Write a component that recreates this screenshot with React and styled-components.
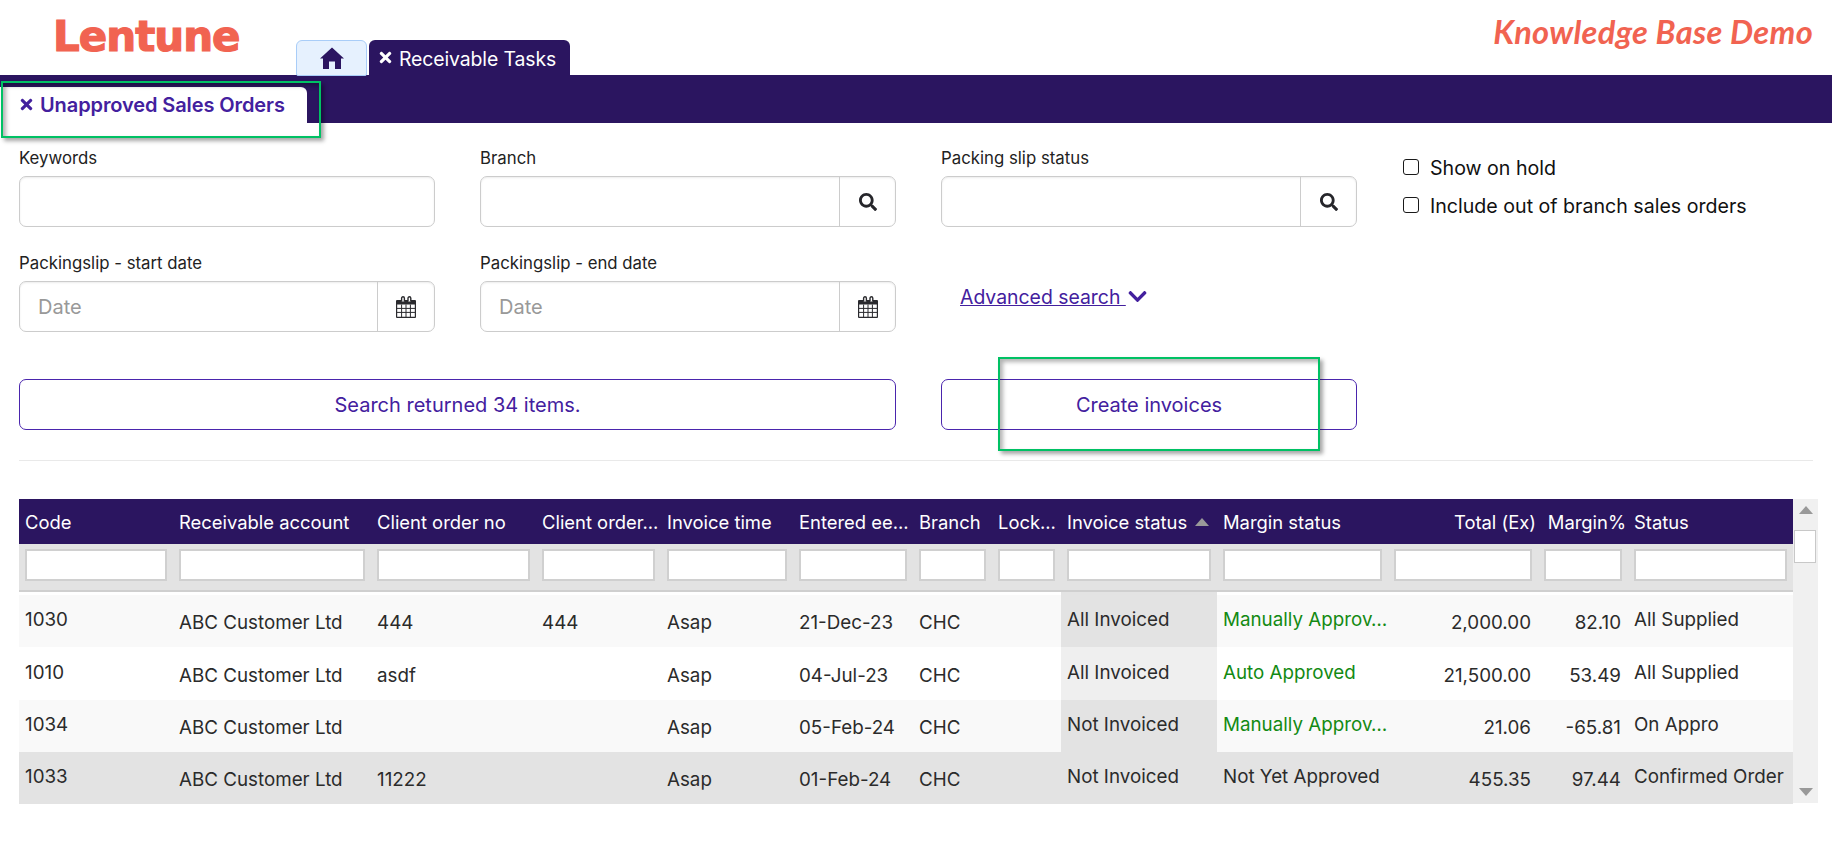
import React from "react";
import styled, { createGlobalStyle } from "styled-components";
import { FaSearch, FaTimes, FaChevronDown } from "react-icons/fa";

const FONT = `"Inter", "Noto Sans", sans-serif`;
const NAVY = "#2b1560";
const PURPLE = "#43209e";
const CORAL = "#f16351";

const Global = createGlobalStyle`
  html, body { margin: 0; padding: 0; background: #fff; }
  body { font-family: ${FONT}; color: #1c1c1c; }
  * { box-sizing: border-box; }
`;

const Page = styled.div`
  position: relative;
  width: 1832px;
  height: 842px;
  overflow: hidden;
  background: #fff;
`;

const Header = styled.header`
  display: grid;
  grid-template-columns: 296px 1fr auto;
  height: 75px;
`;

const Logo = styled.div`
  padding: 11px 0 0 53px;
  font-family: "DejaVu Sans", sans-serif;
  font-weight: 700;
  font-size: 42px;
  line-height: 52px;
  letter-spacing: -1px;
  color: ${CORAL};
  -webkit-text-stroke: 1.2px ${CORAL};
`;

const MainTabs = styled.nav`
  display: flex;
  align-items: flex-end;
  gap: 2px;
`;

const HomeTab = styled.div`
  display: flex;
  align-items: center;
  justify-content: center;
  width: 71px;
  height: 36px;
  margin-bottom: -1px;
  position: relative;
  background: #e6f1fe;
  border: 1.5px solid #a9cdf8;
  border-radius: 6px 6px 2px 2px;
  color: ${NAVY};
`;

const TaskTab = styled.div`
  display: flex;
  align-items: center;
  gap: 5px;
  width: 201px;
  height: 35px;
  padding: 2px 8px 0;
  background: ${NAVY};
  border-radius: 6px 6px 0 0;
  color: #fff;
  font-size: 19.4px;
  letter-spacing: -0.1px;
  white-space: nowrap;
`;

const TabClose = styled(FaTimes)`
  margin-top: -3px;
  flex: none;
`;

const Brand = styled.div`
  padding: 10px 19px 0 0;
  font-family: "Lato", sans-serif;
  font-style: italic;
  font-weight: 700;
  font-size: 32.6px;
  line-height: 44px;
  letter-spacing: 0.3px;
  color: ${CORAL};
`;

const TabBar = styled.div`
  display: flex;
  align-items: flex-end;
  height: 48px;
  background: ${NAVY};
`;

const SubTab = styled.div`
  display: flex;
  align-items: center;
  gap: 5px;
  width: 307px;
  height: 36px;
  padding: 0 0 1px 18px;
  background: #fff;
  border-radius: 0 6px 0 0;
  color: ${PURPLE};
  font-size: 20px;
  font-weight: 600;
  letter-spacing: -0.1px;
  white-space: nowrap;
`;

const Form = styled.div`
  display: grid;
  grid-template-columns: 416px 416px 416px 1fr;
  column-gap: 45px;
  row-gap: 24px;
  margin: 0;
  padding: 23px 19px 0;
`;

const Field = styled.div`
  display: flex;
  flex-direction: column;
  gap: 6px;
`;

const Label = styled.label`
  font-size: 16.8px;
  line-height: 24px;
  color: #222;
`;

const InputGroup = styled.div`
  display: flex;
  height: 51px;
  border: 1.5px solid #cccccc;
  border-radius: 7px;
  overflow: hidden;
  box-shadow: inset 0 1px 2px rgba(0, 0, 0, 0.08);
`;

const TextInput = styled.input`
  flex: 1;
  min-width: 0;
  padding: 0 18px;
  border: 0;
  outline: 0;
  background: transparent;
  font-family: ${FONT};
  font-size: 20px;
  &::placeholder { color: #999; opacity: 1; }
`;

const Addon = styled.div`
  display: flex;
  align-items: center;
  justify-content: center;
  flex: 0 0 ${(p) => (p.$wide ? "57px" : "56px")};
  border-left: 1.5px solid #cccccc;
  color: #26262b;
`;

const Checks = styled.div`
  display: flex;
  flex-direction: column;
  gap: 10px;
  padding: 8px 0 0 1px;
`;

const CheckRow = styled.label`
  display: flex;
  align-items: center;
  gap: 11px;
  font-size: 19.6px;
  line-height: 28px;
  color: #111;
  white-space: nowrap;
`;

const CheckBox = styled.span`
  flex: 0 0 16px;
  width: 16px;
  height: 16px;
  margin-top: -2px;
  border: 1.5px solid #1a1a1a;
  border-radius: 3px;
  background: #fff;
`;

const AdvancedCell = styled.div`
  align-self: center;
  padding: 10px 0 0 19px;
  display: flex;
  align-items: center;
  gap: 1px;
  color: ${PURPLE};
  font-size: 19.4px;
`;

const AdvancedLink = styled.a`
  color: ${PURPLE};
  text-decoration: underline;
  white-space: pre;
`;

const ActionRow = styled.div`
  display: grid;
  grid-template-columns: 877px 416px;
  column-gap: 45px;
  margin: 47px 19px 0;
`;

const OutlineButton = styled.div`
  display: flex;
  align-items: center;
  justify-content: center;
  height: 51px;
  border: 1.5px solid #4a25ad;
  border-radius: 7px;
  color: ${PURPLE};
  font-size: 20px;
`;

const Divider = styled.hr`
  height: 1px;
  margin: 30px 19px 0;
  border: 0;
  background: #e9e9e9;
`;

const GridWrap = styled.div`
  display: flex;
  margin: 38px 0 0 19px;
  height: 305px;
`;

const Table = styled.table`
  width: 1774px;
  table-layout: fixed;
  border-collapse: collapse;
  align-self: flex-start;
`;

const HeadRow = styled.tr`
  height: 45px;
  background: ${NAVY};
`;

const Th = styled.th`
  padding: 0 ${(p) => (p.$right ? "2px" : "0")} 0 6px;
  font-size: 18.4px;
  font-weight: 400;
  color: #fff;
  text-align: ${(p) => (p.$right ? "right" : "left")};
  white-space: nowrap;
  overflow: hidden;
`;

const SortMark = styled.span`
  display: inline-block;
  margin-left: 8px;
  vertical-align: 3px;
  border-left: 7px solid transparent;
  border-right: 7px solid transparent;
  border-bottom: 8px solid #999;
`;

const FilterRow = styled.tr`
  height: 47px;
  background: #e3e3e3;
  border-bottom: 2px solid #cfcfcf;
`;

const FilterCell = styled.td`
  padding: 0 6px 5px;
`;

const FilterInput = styled.input`
  display: block;
  width: 100%;
  height: 32px;
  border: 2px solid #d0d0d0;
  background: #fff;
  outline: 0;
`;

const SpacerRow = styled.tr`
  height: 4px;
`;

const SpacerCell = styled.td`
  padding: 0;
  background: ${(p) => (p.$sorted ? "#e3e3e3" : "#fff")};
`;

const ROW_BG = { odd: "#f9f9f9", even: "#ffffff", active: "#e3e3e3" };
const SORT_BG = { odd: "#e3e3e3", even: "#efefef", active: "#e3e3e3" };

const Row = styled.tr`
  height: ${(p) => p.$h}px;
  background: ${(p) => ROW_BG[p.$kind]};
`;

const Td = styled.td`
  padding: ${(p) => (p.$raised ? "0" : "3px")} ${(p) => (p.$right ? "7px" : "6px")} ${(p) => (p.$raised ? "3px" : "0")} 6px;
  font-size: 18.8px;
  color: ${(p) => (p.$ok ? "#138a13" : "#2b2b2b")};
  background: ${(p) => (p.$sortBg ? SORT_BG[p.$sortBg] : "transparent")};
  text-align: ${(p) => (p.$right ? "right" : "left")};
  white-space: nowrap;
  overflow: hidden;
`;

const Scrollbar = styled.div`
  position: relative;
  display: flex;
  flex-direction: column;
  align-items: center;
  justify-content: space-between;
  width: 25px;
  height: 304px;
  padding: 7px 0;
  background: #f0f0f0;
`;

const Thumb = styled.div`
  position: absolute;
  top: 31px;
  left: 1px;
  width: 22px;
  height: 33px;
  background: #fff;
  border: 1px solid #c8c8c8;
`;

const Arrow = styled.span`
  width: 0;
  height: 0;
  border-left: 7px solid transparent;
  border-right: 7px solid transparent;
  ${(p) => (p.$down ? "border-top: 8px solid #999;" : "border-bottom: 8px solid #999;")}
`;

const Callout = styled.div`
  position: absolute;
  pointer-events: none;
  border: 2px solid #00c164;
  box-shadow: 3px 3px 4px rgba(0, 0, 0, 0.35), inset 3px 3px 4px rgba(0, 0, 0, 0.3);
  left: ${(p) => p.$x}px;
  top: ${(p) => p.$y}px;
  width: ${(p) => p.$w}px;
  height: ${(p) => p.$h}px;
`;

const HomeIcon = () => (
  <svg width="24" height="22" viewBox="0 0 24 22" fill="currentColor" aria-hidden="true">
    <path d="M12 0.5 L24 11.5 L21 11.5 L21 22 L15 22 L15 14.5 L9 14.5 L9 22 L3 22 L3 11.5 L0 11.5 Z" />
  </svg>
);

const CalendarIcon = () => (
  <svg width="20" height="22" viewBox="0 0 20 22" aria-hidden="true">
    <path d="M1 4h18a1 1 0 0 1 1 1v16a1 1 0 0 1-1 1H1a1 1 0 0 1-1-1V5a1 1 0 0 1 1-1z" fill="#2a2a2e" />
    <path d="M1.2 8.5h17.6v12.3H1.2z" fill="#fff" />
    <path d="M1 12.4h18M1 16.4h18M5.6 8.5v12.5M10 8.5v12.5M14.4 8.5v12.5" stroke="#2a2a2e" strokeWidth="1" fill="none" />
    <path d="M5.6 5.5V2.2a1.4 1.4 0 0 1 2.8 0v3.3M12 5.5V2.2a1.4 1.4 0 0 1 2.8 0v3.3" stroke="#2a2a2e" strokeWidth="1.4" fill="#fff" />
  </svg>
);

const COLS = [154, 198, 165, 125, 132, 120, 79, 69, 156, 171, 150, 90, 165];

const HEADS = [
  ["Code"], ["Receivable account"], ["Client order no"], ["Client order..."], ["Invoice time"],
  ["Entered ee..."], ["Branch"], ["Lock..."], ["Invoice status", false, true], ["Margin status"],
  ["Total (Ex)", true], ["Margin%", true], ["Status"],
];

const ROWS = [
  { kind: "odd", h: 52, code: "1030", client: "444", clientOrder: "444", date: "21-Dec-23", inv: "All Invoiced", margin: "Manually Approv…", ok: true, total: "2,000.00", pct: "82.10", status: "All Supplied" },
  { kind: "even", h: 53, code: "1010", client: "asdf", clientOrder: "", date: "04-Jul-23", inv: "All Invoiced", margin: "Auto Approved", ok: true, total: "21,500.00", pct: "53.49", status: "All Supplied" },
  { kind: "odd", h: 52, code: "1034", client: "", clientOrder: "", date: "05-Feb-24", inv: "Not Invoiced", margin: "Manually Approv…", ok: true, total: "21.06", pct: "-65.81", status: "On Appro" },
  { kind: "active", h: 52, code: "1033", client: "11222", clientOrder: "", date: "01-Feb-24", inv: "Not Invoiced", margin: "Not Yet Approved", ok: false, total: "455.35", pct: "97.44", status: "Confirmed Order" },
];

export default function App() {
  return (
    <Page>
      <Global />
      <Header>
        <Logo>Lentune</Logo>
        <MainTabs>
          <HomeTab><HomeIcon /></HomeTab>
          <TaskTab><TabClose size={17} />Receivable Tasks</TaskTab>
        </MainTabs>
        <Brand>Knowledge Base Demo</Brand>
      </Header>
      <TabBar>
        <SubTab><FaTimes size={17} />Unapproved Sales Orders</SubTab>
      </TabBar>
      <Form>
        <Field>
          <Label>Keywords</Label>
          <InputGroup><TextInput /></InputGroup>
        </Field>
        <Field>
          <Label>Branch</Label>
          <InputGroup><TextInput /><Addon><FaSearch size={18} /></Addon></InputGroup>
        </Field>
        <Field>
          <Label>Packing slip status</Label>
          <InputGroup><TextInput /><Addon><FaSearch size={18} /></Addon></InputGroup>
        </Field>
        <Checks>
          <CheckRow><CheckBox />Show on hold</CheckRow>
          <CheckRow><CheckBox />Include out of branch sales orders</CheckRow>
        </Checks>
        <Field>
          <Label>Packingslip - start date</Label>
          <InputGroup><TextInput placeholder="Date" /><Addon $wide><CalendarIcon /></Addon></InputGroup>
        </Field>
        <Field>
          <Label>Packingslip - end date</Label>
          <InputGroup><TextInput placeholder="Date" /><Addon><CalendarIcon /></Addon></InputGroup>
        </Field>
        <AdvancedCell>
          <AdvancedLink>Advanced search </AdvancedLink>
          <FaChevronDown size={21} />
        </AdvancedCell>
      </Form>
      <ActionRow>
        <OutlineButton>Search returned 34 items.</OutlineButton>
        <OutlineButton>Create invoices</OutlineButton>
      </ActionRow>
      <Divider />
      <GridWrap>
        <Table>
          <colgroup>
            {COLS.map((w, i) => <col key={i} style={{ width: w }} />)}
          </colgroup>
          <thead>
            <HeadRow>
              {HEADS.map(([t, right, sorted]) => (
                <Th key={t} $right={right}>{t}{sorted && <SortMark />}</Th>
              ))}
            </HeadRow>
            <FilterRow>
              {COLS.map((_, i) => <FilterCell key={i}><FilterInput /></FilterCell>)}
            </FilterRow>
          </thead>
          <tbody>
            <SpacerRow>
              <SpacerCell colSpan={8} />
              <SpacerCell $sorted />
              <SpacerCell colSpan={4} />
            </SpacerRow>
            {ROWS.map((r) => (
              <Row key={r.code} $kind={r.kind} $h={r.h}>
                <Td $raised>{r.code}</Td>
                <Td>ABC Customer Ltd</Td>
                <Td>{r.client}</Td>
                <Td>{r.clientOrder}</Td>
                <Td>Asap</Td>
                <Td>{r.date}</Td>
                <Td>CHC</Td>
                <Td />
                <Td $raised $sortBg={r.kind}>{r.inv}</Td>
                <Td $raised $ok={r.ok}>{r.margin}</Td>
                <Td $right>{r.total}</Td>
                <Td $right>{r.pct}</Td>
                <Td $raised>{r.status}</Td>
              </Row>
            ))}
          </tbody>
        </Table>
        <Scrollbar>
          <Arrow />
          <Thumb />
          <Arrow $down />
        </Scrollbar>
      </GridWrap>
      <Callout $x={1} $y={81} $w={320} $h={57} />
      <Callout $x={998} $y={357} $w={322} $h={94} />
    </Page>
  );
}
